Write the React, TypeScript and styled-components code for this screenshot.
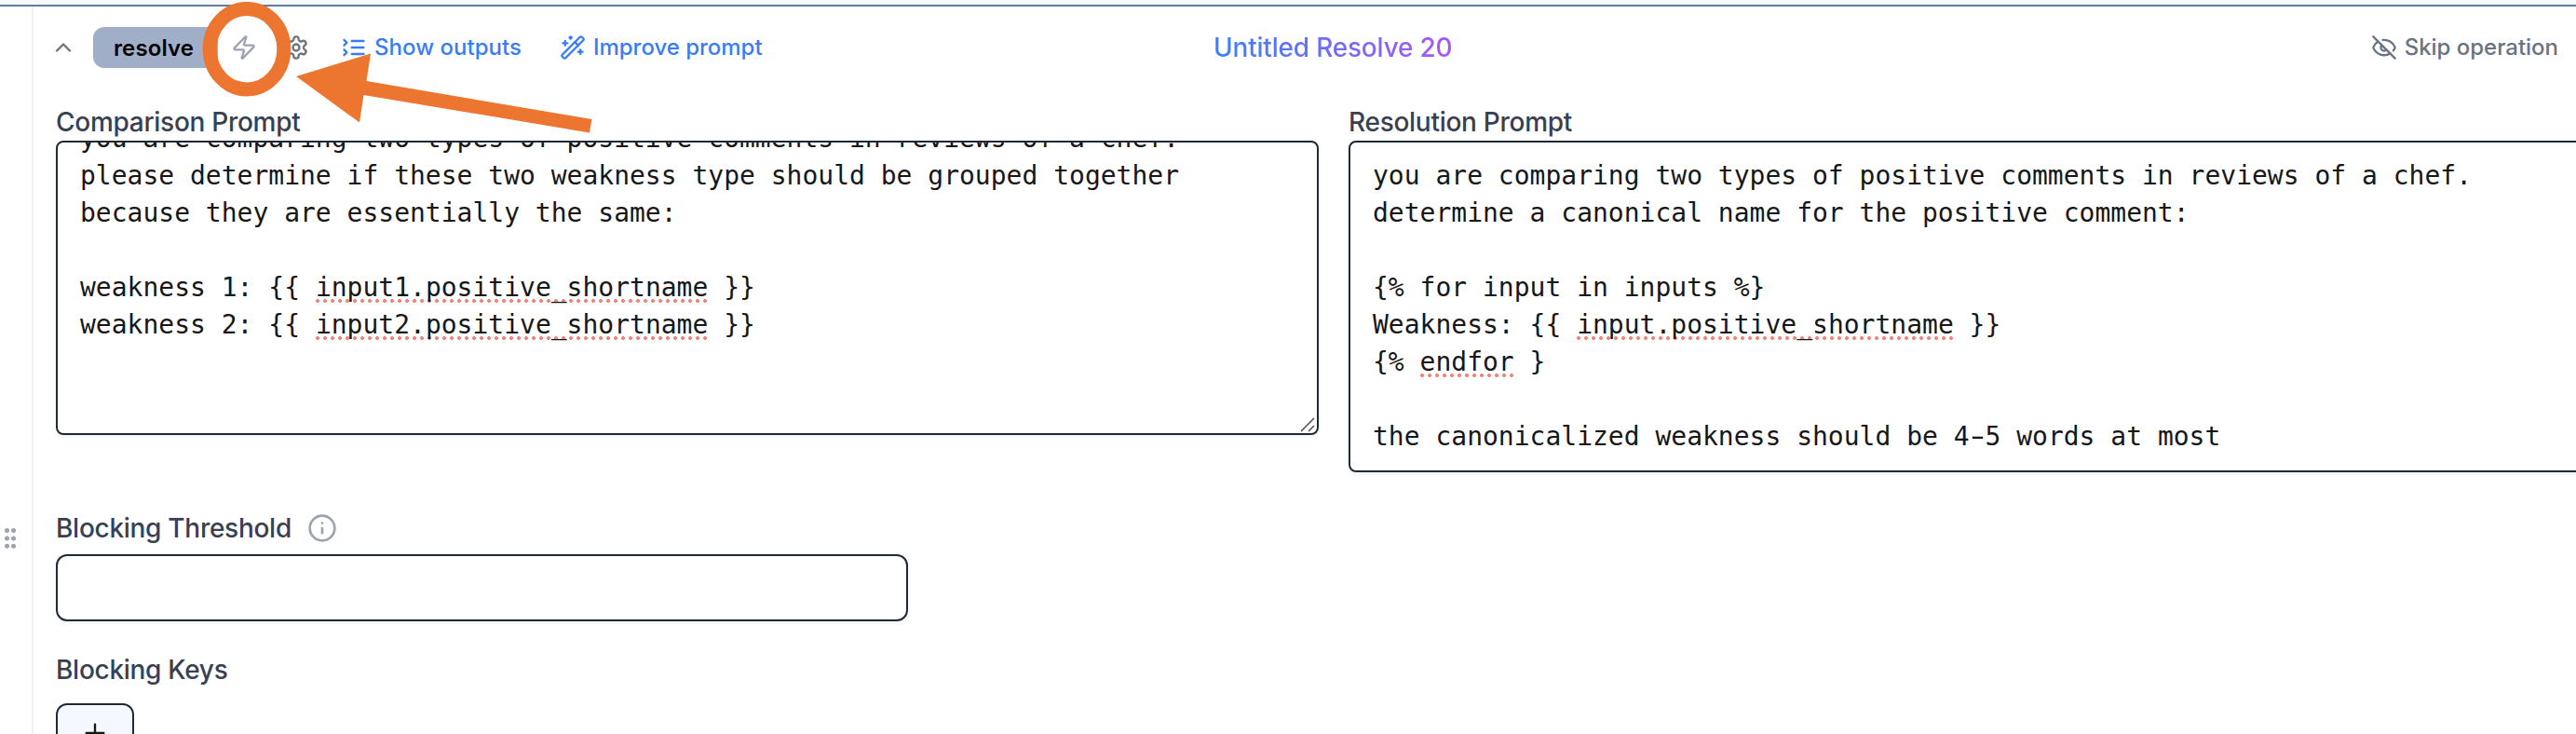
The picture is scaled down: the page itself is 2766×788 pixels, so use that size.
import React from "react";
import styled, { createGlobalStyle } from "styled-components";
import { ChevronUp, Zap, WandSparkles, Info, Plus } from "lucide-react";

const GlobalStyle = createGlobalStyle`
  *, *::before, *::after { box-sizing: border-box; }
  html, body { margin: 0; padding: 0; overflow: hidden; }
  body { background: #fff; font-family: Inter, "Liberation Sans", sans-serif; }
`;

const Page = styled.div`
  position: relative;
  width: 2766px;
  height: 788px;
  overflow: hidden;
  background: #f9fafb;
  padding-top: 5px;
`;

const Card = styled.div`
  display: flex;
  height: 783px;
  background: #fff;
  border-top: 2px solid #5f7ca9;
`;

const DragRail = styled.div`
  flex: 0 0 36px;
  border-right: 2px solid #f1f2f4;
  padding: 560px 0 0 5px;
`;

const GripDots = styled.svg`
  display: block;
  width: 12px;
  height: 22px;
  fill: #9ca3af;
`;

const Content = styled.div`
  flex: 1;
  min-width: 0;
  padding-left: 24px;
`;

const Toolbar = styled.div`
  display: flex;
  align-items: center;
  height: 87px;
  padding-right: 19px;
`;

const ToolGroup = styled.div`
  display: flex;
  align-items: center;
  flex: 0 0 1243px;
`;

const IconButton = styled.span<{ $color: string; $left: number }>`
  display: flex;
  margin-left: ${(p) => p.$left}px;
  color: ${(p) => p.$color};
`;

const Badge = styled.span`
  width: 134px;
  height: 44px;
  margin-left: 18px;
  padding-left: 22px;
  border-radius: 12px;
  background: #a0afc7;
  color: #000;
  font-size: 24px;
  font-weight: 600;
  line-height: 45px;
  letter-spacing: 0.1px;
`;

const Action = styled.span<{ $left: string; $color: string; $spacing: number }>`
  display: flex;
  align-items: center;
  gap: 8px;
  margin-left: ${(p) => p.$left};
  color: ${(p) => p.$color};
  font-size: 24px;
  font-weight: 500;
  line-height: 32px;
  letter-spacing: ${(p) => p.$spacing}px;
  white-space: nowrap;
`;

const Title = styled.span`
  background: linear-gradient(to right, #3b82f6, #a855f7);
  background-clip: text;
  -webkit-background-clip: text;
  color: transparent;
  font-size: 28px;
  font-weight: 500;
  line-height: 40px;
  letter-spacing: -0.2px;
`;

const Prompts = styled.div`
  display: grid;
  grid-template-columns: 1356px 1356px;
  column-gap: 32px;
  align-items: start;
  padding-top: 17px;
`;

const Label = styled.div`
  display: flex;
  align-items: center;
  height: 40px;
  color: #374151;
  font-size: 28px;
  font-weight: 500;
  line-height: 40px;
  letter-spacing: -0.28px;
`;

const PromptArea = styled.div<{ $height: number }>`
  position: relative;
  height: ${(p) => p.$height}px;
  border: 2px solid #1f2937;
  border-radius: 8px;
  padding: 0 24px;
  overflow: hidden;
  box-shadow: 0 2px 4px rgba(0, 0, 0, 0.06);
`;

const PromptText = styled.div<{ $scrolled?: boolean }>`
  margin-top: ${(p) => (p.$scrolled ? -24 : 16)}px;
  color: #171717;
  font-family: "DejaVu Sans Mono", monospace;
  font-size: 28px;
`;

const Line = styled.div`
  height: 40px;
  line-height: 40px;
  white-space: pre;
`;

const Misspelled = styled.span`
  background-image: radial-gradient(circle at 2px 2px, #f2857a 1.6px, transparent 2.3px);
  background-size: 8px 4px;
  background-repeat: repeat-x;
  background-position: 0 100%;
`;

const WideHyphen = styled.span`
  display: inline-block;
  transform: scaleX(1.6);
`;

const ResizeHandle = styled.svg`
  position: absolute;
  right: 1px;
  bottom: 1px;
  width: 18px;
  height: 16px;
  stroke: #555;
  stroke-width: 1.6;
`;

const Fields = styled.div`
  display: flex;
  flex-direction: column;
  align-items: flex-start;
  padding-top: 40px;
`;

const InfoIcon = styled.span`
  display: flex;
  margin-left: 17px;
  color: #9ca3af;
`;

const TextInput = styled.div`
  width: 915px;
  height: 72px;
  margin: 8px 0 32px;
  border: 2px solid #1f2937;
  border-radius: 12px;
  box-shadow: 0 2px 4px rgba(0, 0, 0, 0.06);
`;

const AddButton = styled.div`
  display: flex;
  justify-content: center;
  width: 84px;
  height: 64px;
  margin-top: 16px;
  padding-top: 14px;
  border: 2px solid #1f2937;
  border-radius: 12px;
  background: #f5f9ff;
  color: #171717;
`;

const Annotation = styled.svg`
  position: absolute;
  left: 210px;
  top: 0;
  width: 440px;
  height: 150px;
`;

const StrokeIcon = ({ children }: { children: React.ReactNode }) => (
  <svg width="28" height="28" viewBox="0 0 24 24" fill="none" stroke="currentColor" strokeWidth="2" strokeLinecap="round" strokeLinejoin="round">
    {children}
  </svg>
);

const GearIcon = () => (
  <StrokeIcon>
    <path d="M12.22 2h-.44a2 2 0 0 0-2 2v.18a2 2 0 0 1-1 1.73l-.43.25a2 2 0 0 1-2 0l-.15-.08a2 2 0 0 0-2.73.73l-.22.38a2 2 0 0 0 .73 2.73l.15.1a2 2 0 0 1 1 1.72v.51a2 2 0 0 1-1 1.74l-.15.09a2 2 0 0 0-.73 2.73l.22.38a2 2 0 0 0 2.73.73l.15-.08a2 2 0 0 1 2 0l.43.25a2 2 0 0 1 1 1.73V20a2 2 0 0 0 2 2h.44a2 2 0 0 0 2-2v-.18a2 2 0 0 1 1-1.73l.43-.25a2 2 0 0 1 2 0l.15.08a2 2 0 0 0 2.73-.73l.22-.39a2 2 0 0 0-.73-2.73l-.15-.08a2 2 0 0 1-1-1.74v-.5a2 2 0 0 1 1-1.74l.15-.09a2 2 0 0 0 .73-2.73l-.22-.38a2 2 0 0 0-2.73-.73l-.15.08a2 2 0 0 1-2 0l-.43-.25a2 2 0 0 1-1-1.73V4a2 2 0 0 0-2-2z" />
    <circle cx="12" cy="12" r="3" />
  </StrokeIcon>
);

const OutputsIcon = () => (
  <StrokeIcon>
    <path d="m3 10 2.5-2.5L3 5" />
    <path d="m3 19 2.5-2.5L3 14" />
    <path d="M10 6h11" />
    <path d="M10 12h11" />
    <path d="M10 18h11" />
  </StrokeIcon>
);

const HiddenIcon = () => (
  <StrokeIcon>
    <path d="M10.733 5.076a10.744 10.744 0 0 1 11.205 6.575 1 1 0 0 1 0 .696 10.747 10.747 0 0 1-1.444 2.49" />
    <path d="M14.084 14.158a3 3 0 0 1-4.242-4.242" />
    <path d="M17.479 17.499a10.75 10.75 0 0 1-15.417-5.151 1 1 0 0 1 0-.696 10.75 10.75 0 0 1 4.446-5.143" />
    <path d="m2 2 20 20" />
  </StrokeIcon>
);

export default function App() {
  return (
    <Page>
      <GlobalStyle />
      <Card>
        <DragRail>
          <GripDots viewBox="0 0 12 22">
            {[2.5, 11, 19.3].map((y) => (
              <React.Fragment key={y}>
                <circle cx="2.5" cy={y} r="2.5" />
                <circle cx="9.5" cy={y} r="2.5" />
              </React.Fragment>
            ))}
          </GripDots>
        </DragRail>
        <Content>
          <Toolbar>
            <ToolGroup>
              <IconButton $color="#6b7280" $left={-6}>
                <ChevronUp size={28} />
              </IconButton>
              <Badge>resolve</Badge>
              <IconButton $color="#9ca3af" $left={14}>
                <Zap size={28} />
              </IconButton>
              <IconButton $color="#6b7280" $left={28}>
                <GearIcon />
              </IconButton>
              <Action $left="34px" $color="#387df6" $spacing={0.03}>
                <OutputsIcon />
                Show outputs
              </Action>
              <Action $left="41px" $color="#387df6" $spacing={-0.02}>
                <WandSparkles size={28} />
                Improve prompt
              </Action>
            </ToolGroup>
            <Title>Untitled Resolve 20</Title>
            <Action $left="auto" $color="#6b7280" $spacing={-0.02}>
              <HiddenIcon />
              Skip operation
            </Action>
          </Toolbar>

          <Prompts>
            <div>
              <Label>Comparison Prompt</Label>
              <PromptArea $height={316}>
                <PromptText $scrolled>
                  <Line>you are comparing two types of positive comments in reviews of a chef.</Line>
                  <Line>please determine if these two weakness type should be grouped together</Line>
                  <Line>because they are essentially the same:</Line>
                  <Line />
                  <Line>
                    {"weakness 1: {{ "}
                    <Misspelled>input1.positive_shortname</Misspelled>
                    {" }}"}
                  </Line>
                  <Line>
                    {"weakness 2: {{ "}
                    <Misspelled>input2.positive_shortname</Misspelled>
                    {" }}"}
                  </Line>
                </PromptText>
                <ResizeHandle viewBox="0 0 18 16">
                  <path d="M2 15 L16 1 M10 15 L16 9" />
                </ResizeHandle>
              </PromptArea>
            </div>
            <div>
              <Label>Resolution Prompt</Label>
              <PromptArea $height={356}>
                <PromptText>
                  <Line>you are comparing two types of positive comments in reviews of a chef.</Line>
                  <Line>determine a canonical name for the positive comment:</Line>
                  <Line />
                  <Line>{"{% for input in inputs %}"}</Line>
                  <Line>
                    {"Weakness: {{ "}
                    <Misspelled>input.positive_shortname</Misspelled>
                    {" }}"}
                  </Line>
                  <Line>
                    {"{% "}
                    <Misspelled>endfor</Misspelled>
                    {" }"}
                  </Line>
                  <Line />
                  <Line>
                    the canonicalized weakness should be 4<WideHyphen>-</WideHyphen>5 words at most
                  </Line>
                </PromptText>
              </PromptArea>
            </div>
          </Prompts>

          <Fields>
            <Label>
              Blocking Threshold
              <InfoIcon>
                <Info size={32} />
              </InfoIcon>
            </Label>
            <TextInput />
            <Label>Blocking Keys</Label>
            <AddButton>
              <Plus size={32} strokeWidth={1.75} />
            </AddButton>
          </Fields>
        </Content>
      </Card>
      <Annotation viewBox="210 0 440 150">
        <ellipse cx="265" cy="52.7" rx="39.8" ry="43.2" fill="none" stroke="#ec752f" strokeWidth="15" />
        <path d="M318 82 L398 57.5 L393.5 87 L635.5 128 L633 142.5 L390.5 102 L386 131.5 Z" fill="#ec752f" />
      </Annotation>
    </Page>
  );
}
